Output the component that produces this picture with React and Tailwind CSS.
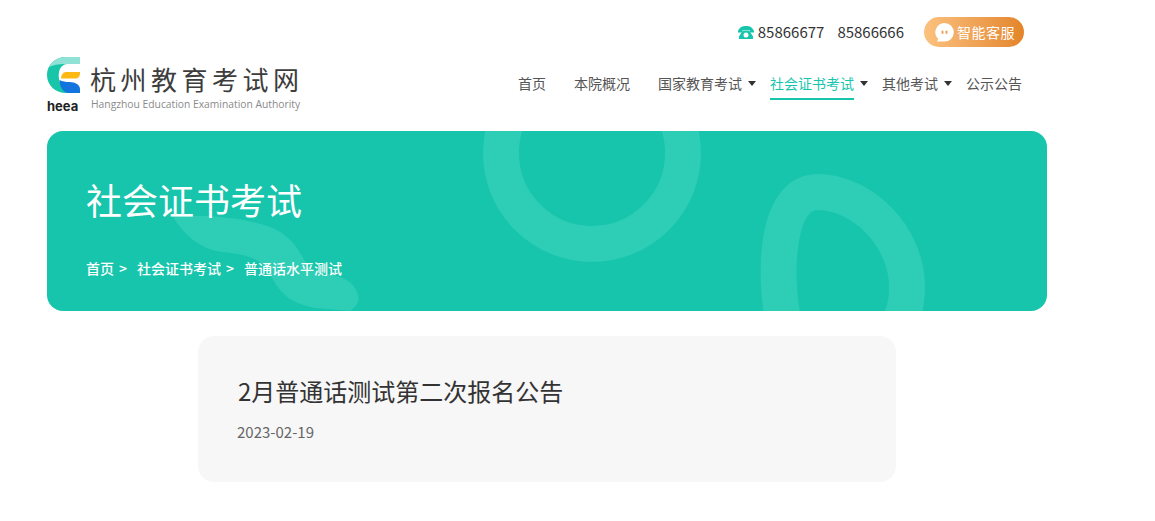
const font = { fontFamily: '"Noto Sans CJK SC", "Noto Sans", sans-serif' }

const navItems = [
  { label: '首页' },
  { label: '本院概况' },
  { label: '国家教育考试', arrow: true },
  { label: '社会证书考试', arrow: true, active: true },
  { label: '其他考试', arrow: true },
  { label: '公示公告' },
]

function LogoMark() {
  return (
    <svg width="33" height="36" viewBox="0 0 33 36" className="block">
      <path d="M19 0C8 0 0 8 0 18c0 10 8 18 19 18h13C20 36 13 30 12 22c-1-8 1-14 8-15z" fill="#17c6a9" />
      <path d="M33 0H19C11 0 5 4 2 10c4-2 9-3 16-3h15z" fill="#8fe2d5" />
      <path d="M19 15h14v1.500c0 3-2 5-5 5H14c0-3 2-6.500 5-6.500z" fill="#fdb913" />
      <path d="M12.500 23c3 1.500 6 2 10 2 6 0 10.500 3 10.500 7v4H21c-5-1-8.500-6-8.500-13z" fill="#1275dd" />
    </svg>
  )
}

function PhoneIcon() {
  return (
    <svg width="16" height="13" viewBox="0 0 16 13" className="block">
      <path d="M0 5.200C1.500 1.200 4.500 0 8 0s6.500 1.200 8 5.200V6.500h-4V4.400H4v2.100H0z" fill="#16c5ac" />
      <path fillRule="evenodd" d="M4.500 5h7L15 10.500V13H1v-2.500zM8 6.400a2.500 2.500 0 100 5 2.500 2.500 0 000-5z" fill="#16c5ac" />
    </svg>
  )
}

function ChatIcon() {
  return (
    <svg width="19" height="19" viewBox="0 0 19 19" className="block">
      <path d="M9.500 0a9.300 9.300 0 110 18.600H1.500c1-.8 1.600-2 1.300-3A9.300 9.300 0 019.500 0z" fill="#fff" />
      <rect x="6.500" y="7.500" width="2" height="3.500" rx="1" fill="#eda45a" />
      <rect x="10.500" y="7.500" width="2" height="3.500" rx="1" fill="#eda45a" />
    </svg>
  )
}

function BannerArt() {
  return (
    <svg className="absolute inset-0 pointer-events-none" width="1000" height="180" viewBox="0 0 1000 180">
      <circle cx="545" cy="22" r="91" fill="none" stroke="#2ecdb6" strokeWidth="36" />
      <path d="M736 190C726 130 732 62 770 61C815 61 860 105 860 156C860 170 858 182 852 190" fill="none" stroke="#2ecdb6" strokeWidth="36" />
      <path d="M126 86C150 84 190 84 226 97C250 108 255 128 262 136C275 146 305 140 311 164C313 172 308 176 303 180L268 177C245 172 235 165 225 147C215 128 205 124 175 121C150 118 135 100 126 86Z" fill="#2ecdb6" />
    </svg>
  )
}

export default function App() {
  return (
    <div style={font} className="w-[1155px] h-[521px] bg-white overflow-hidden">
      <header className="pl-[47px] pr-[131px] pt-[17px]">
        <div className="h-[30px] flex items-center justify-end">
          <PhoneIcon />
          <span className="ml-[4px] text-[15px] text-[#333]">85866677</span>
          <span className="ml-[13px] text-[15px] text-[#333]">85866666</span>
          <div className="ml-[20px] w-[100px] h-[30px] rounded-full bg-gradient-to-r from-[#fbc27e] to-[#e38528] flex items-center pl-[11px]">
            <ChatIcon />
            <span className="ml-[3px] text-[14px] tracking-[0.5px] text-white">智能客服</span>
          </div>
        </div>
        <div className="mt-[10px] h-[55px] flex items-start justify-between">
          <div className="flex gap-[11px]">
            <div className="w-[33px]">
              <LogoMark />
              <p className="mt-[6px] text-[13px] leading-[14px] font-bold text-[#222]" style={{ fontFamily: 'Inter, sans-serif' }}>heea</p>
            </div>
            <div className="pt-[4px]">
              <p className="-ml-[1px] text-[26px] leading-[35px] tracking-[4.500px] text-[#3d3d3d] whitespace-nowrap">杭州教育考试网</p>
              <p className="mt-[1px] text-[10.300px] leading-[14px] text-[#8a8a8a] whitespace-nowrap" style={{ fontFamily: '"Open Sans", sans-serif' }}>Hangzhou Education Examination Authority</p>
            </div>
          </div>
          <nav className="flex mr-[2px] pt-[11px] text-[14px] text-[#555]">
            {navItems.map((item) => (
              <div key={item.label} className={`flex items-start ${item.arrow ? 'mr-[14px]' : 'mr-[28px] last:mr-0'}`}>
                <span className={`h-[32px] leading-[30px] ${item.active ? 'text-[#16c5ac] border-b-2 border-[#16c5ac]' : ''}`}>{item.label}</span>
                {item.arrow && <span className="ml-[6px] mt-[13px] w-0 h-0 border-x-4 border-x-transparent border-t-[5px] border-t-[#333]" />}
              </div>
            ))}
          </nav>
        </div>
      </header>

      <section className="relative ml-[47px] mt-[19px] w-[1000px] h-[180px] rounded-[16px] bg-[#16c5ac] overflow-hidden text-white">
        <BannerArt />
        <div className="relative pl-[39px] pt-[42px]">
          <h1 className="text-[36px] leading-[52px] font-normal">社会证书考试</h1>
          <div className="mt-[33px] flex text-[14px] leading-[20px] font-medium">
            <span>首页</span>
            <span className="ml-[5px]">&gt;</span>
            <span className="ml-[10px]">社会证书考试</span>
            <span className="ml-[5px]">&gt;</span>
            <span className="ml-[10px]">普通话水平测试</span>
          </div>
        </div>
      </section>

      <main className="ml-[198px] mt-[25px] w-[698px] h-[146px] rounded-[16px] bg-[#f7f7f7] pl-[39px] pt-[37px]">
        <h2 className="ml-[1px] text-[24px] leading-[36px] font-normal text-[#333]">2月普通话测试第二次报名公告</h2>
        <p className="mt-[12px] text-[15px] leading-[22px] text-[#666]">2023-02-19</p>
      </main>
    </div>
  )
}
